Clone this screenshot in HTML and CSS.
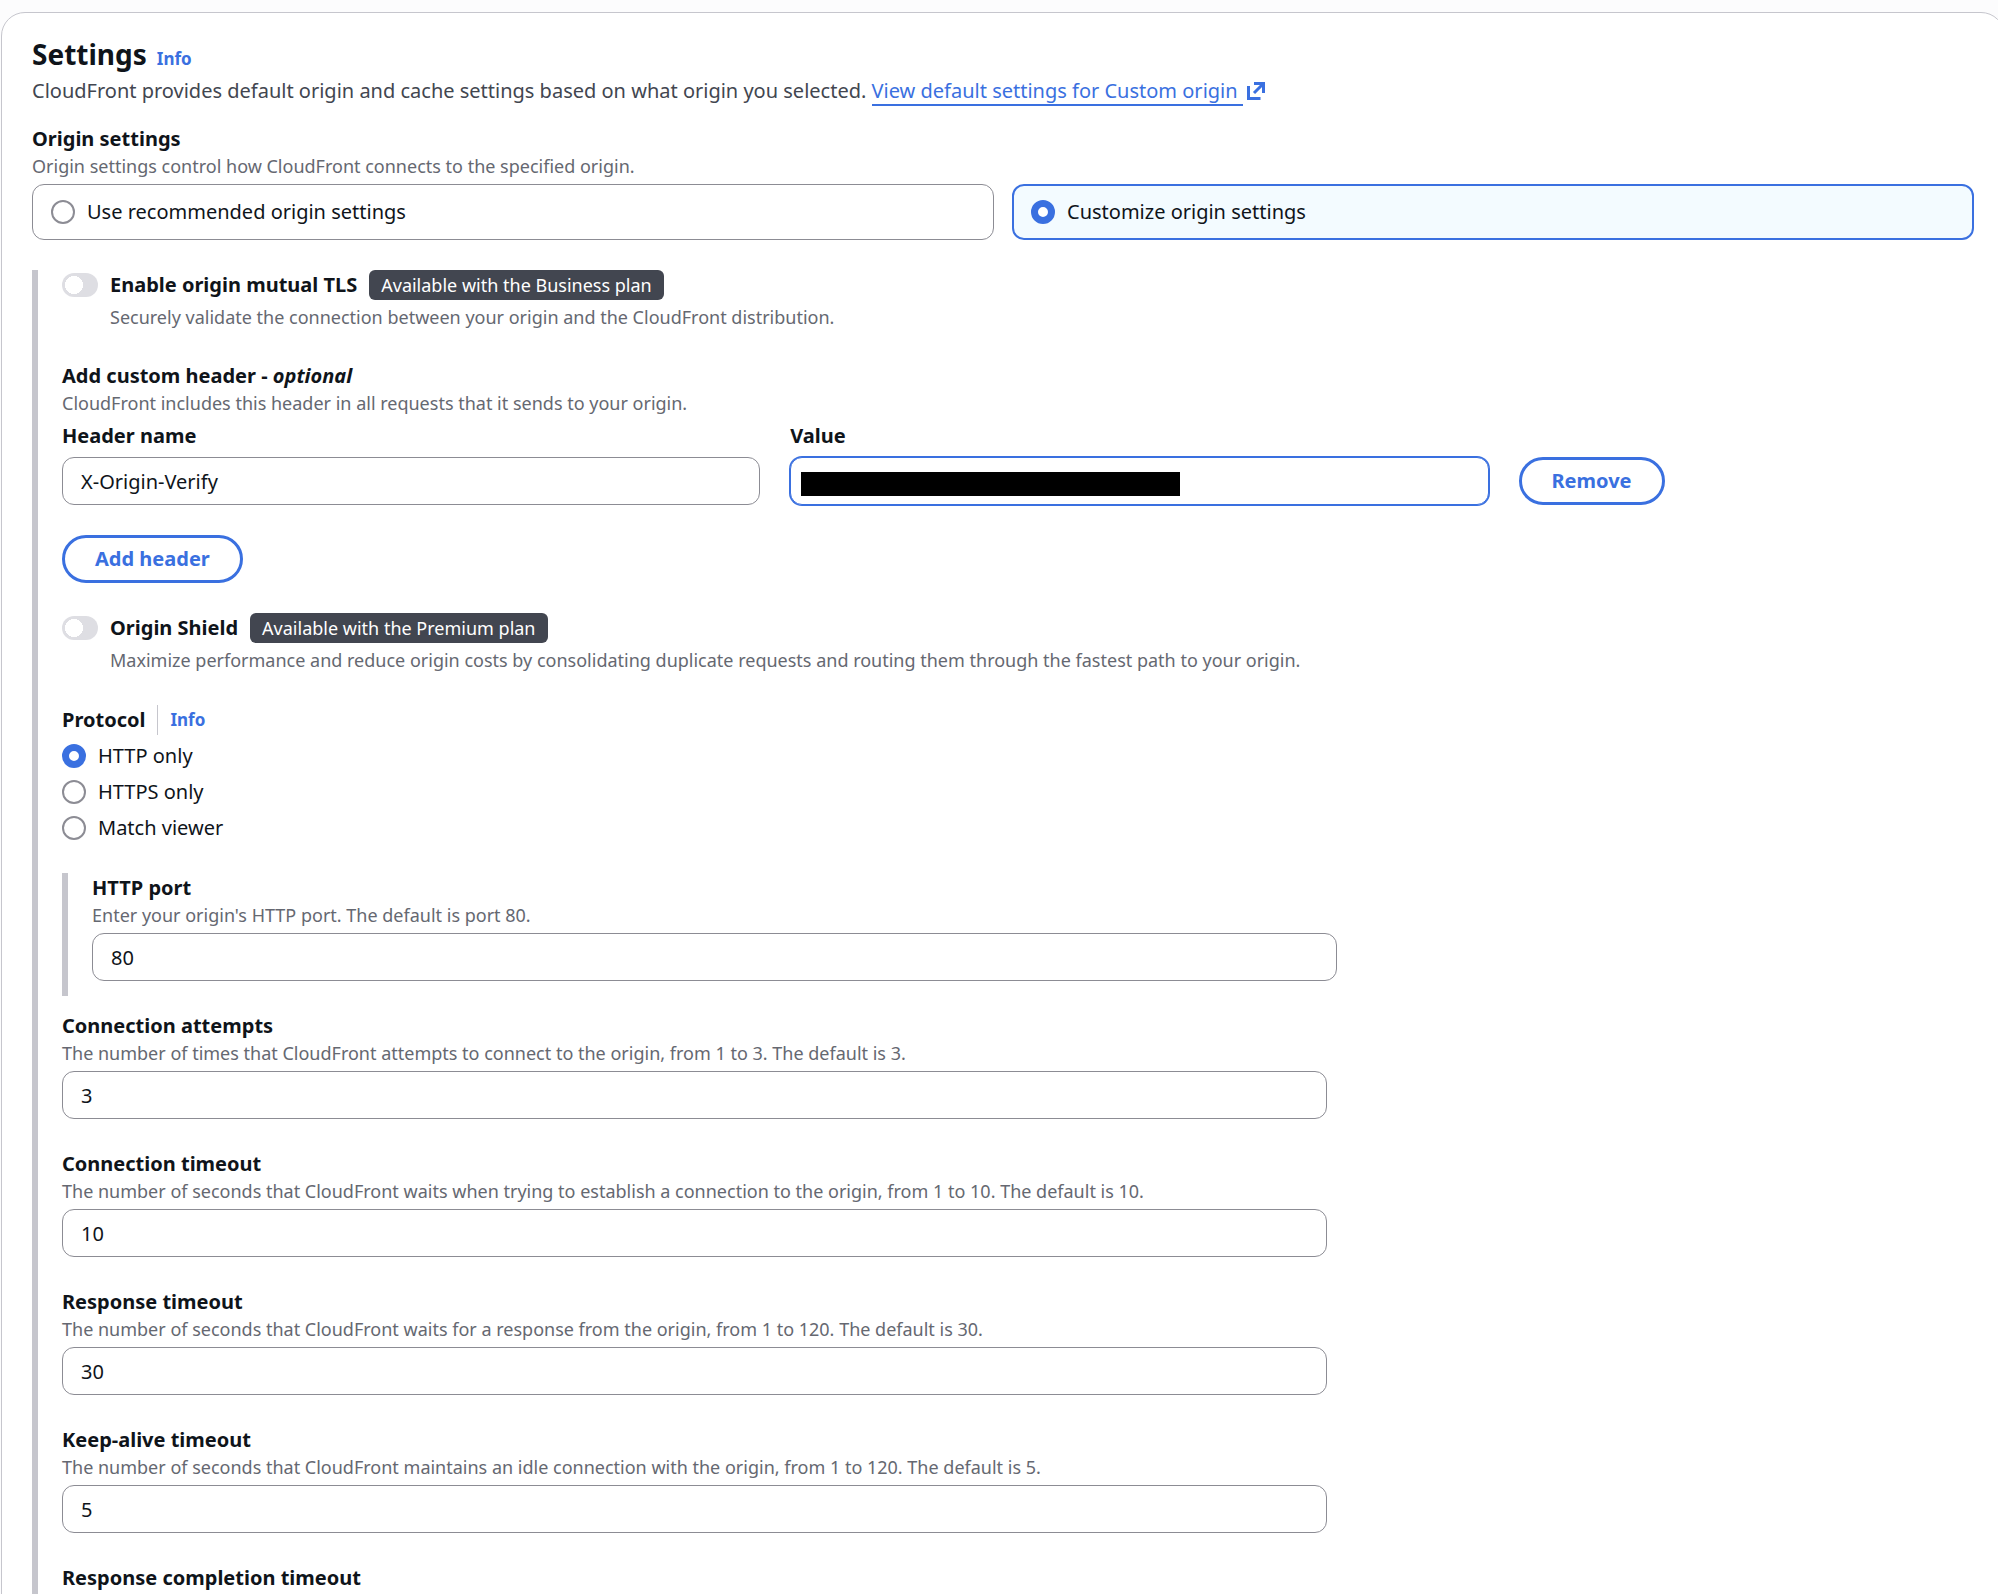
FILE: index.html
```html
<!DOCTYPE html>
<html lang="en">
<head>
    <meta charset="UTF-8">
    <meta name="viewport" content="width=device-width, initial-scale=1.0">
    <title>Create distribution</title>
    <link rel="stylesheet" href="styles.css">
</head>
<body>
    <main class="card">
        <header>
            <div class="card-title">
                <h1>Settings</h1>
                <a class="info" href="#">Info</a>
            </div>
            <p class="card-desc">CloudFront provides default origin and cache settings based on what origin you selected.
                <a class="external" href="#"><span>View default settings for Custom origin&nbsp;</span><svg class="icon" viewBox="0 0 18 18" aria-hidden="true"><path d="M1.5 4v12.5h12M7 1.5h9.5V11M16 2L7 11" fill="none" stroke="currentColor" stroke-width="3"/></svg></a>
            </p>
        </header>

        <fieldset class="origin-settings">
            <legend class="label">Origin settings</legend>
            <p class="hint">Origin settings control how CloudFront connects to the specified origin.</p>
            <div class="tiles">
                <label class="tile">
                    <input type="radio" name="origin">
                    Use recommended origin settings
                </label>
                <label class="tile selected">
                    <input type="radio" name="origin" checked>
                    Customize origin settings
                </label>
            </div>
        </fieldset>

        <section class="nested">
            <div class="toggle-field">
                <input type="checkbox" class="toggle" id="mtls" disabled>
                <label class="label" for="mtls">Enable origin mutual TLS</label>
                <span class="badge">Available with the Business plan</span>
                <p class="hint">Securely validate the connection between your origin and the CloudFront distribution.</p>
            </div>

            <div class="custom-header">
                <h2 class="label">Add custom header - <em>optional</em></h2>
                <p class="hint">CloudFront includes this header in all requests that it sends to your origin.</p>
                <div class="header-row">
                    <div class="header-col">
                        <label class="label" for="header-name">Header name</label>
                        <input type="text" id="header-name" value="X-Origin-Verify">
                    </div>
                    <div class="header-col">
                        <label class="label" for="header-value">Value</label>
                        <input type="text" class="focused redacted" id="header-value">
                    </div>
                    <button type="button" class="btn">Remove</button>
                </div>
                <button type="button" class="btn">Add header</button>
            </div>

            <div class="toggle-field">
                <input type="checkbox" class="toggle" id="shield" disabled>
                <label class="label" for="shield">Origin Shield</label>
                <span class="badge">Available with the Premium plan</span>
                <p class="hint">Maximize performance and reduce origin costs by consolidating duplicate requests and routing them through the fastest path to your origin.</p>
            </div>

            <div class="protocol" role="radiogroup" aria-labelledby="protocol-label">
                <div class="protocol-title">
                    <h2 class="label" id="protocol-label">Protocol</h2>
                    <a class="info" href="#">Info</a>
                </div>
                <label class="radio"><input type="radio" name="protocol" checked>HTTP only</label>
                <label class="radio"><input type="radio" name="protocol">HTTPS only</label>
                <label class="radio"><input type="radio" name="protocol">Match viewer</label>
            </div>

            <div class="nested port">
                <div class="field">
                    <label class="label" for="port">HTTP port</label>
                    <p class="hint">Enter your origin's HTTP port. The default is port 80.</p>
                    <input type="text" id="port" value="80">
                </div>
            </div>

            <div class="field">
                <label class="label" for="attempts">Connection attempts</label>
                <p class="hint">The number of times that CloudFront attempts to connect to the origin, from 1 to 3. The default is 3.</p>
                <input type="text" id="attempts" value="3">
            </div>

            <div class="field">
                <label class="label" for="conn-timeout">Connection timeout</label>
                <p class="hint">The number of seconds that CloudFront waits when trying to establish a connection to the origin, from 1 to 10. The default is 10.</p>
                <input type="text" id="conn-timeout" value="10">
            </div>

            <div class="field">
                <label class="label" for="resp-timeout">Response timeout</label>
                <p class="hint">The number of seconds that CloudFront waits for a response from the origin, from 1 to 120. The default is 30.</p>
                <input type="text" id="resp-timeout" value="30">
            </div>

            <div class="field">
                <label class="label" for="keep-alive">Keep-alive timeout</label>
                <p class="hint">The number of seconds that CloudFront maintains an idle connection with the origin, from 1 to 120. The default is 5.</p>
                <input type="text" id="keep-alive" value="5">
            </div>

            <div class="field">
                <h2 class="label">Response completion timeout</h2>
            </div>
        </section>
    </main>
</body>
</html>
```
FILE: styles.css
```css
* {
    box-sizing: border-box;
}
body {
    margin: 0;
    padding-top: 12px;
    background-color: #fcfcfd;
    color: #0f141a;
    font-family: "Noto Sans", sans-serif;
    font-size: 20px;
    line-height: 30px;
    overflow: hidden;
}
h1, h2, p {
    margin: 0;
}
input, button {
    margin: 0;
    font: inherit;
    color: inherit;
}
a {
    color: #3a70e0;
    text-decoration: none;
}

/* card, runs slightly past the right edge */
.card {
    margin: 0 -7px 0 1px;
    padding: 23px 30px 0;
    border: 1px solid #c6c6cd;
    border-radius: 24px;
    background-color: #fff;
}
.card-title {
    display: flex;
    align-items: baseline;
    gap: 10px;
}
h1 {
    font-size: 28px;
    line-height: 36px;
}
.info {
    font-size: 17px;
    font-weight: 700;
}
.card-desc {
    margin-top: 2px;
    color: #424650;
}
.external span {
    border-bottom: 2px solid #3a70e0;
}
.icon {
    width: 18px;
    height: 18px;
    margin-left: 4px;
    vertical-align: -2px;
}

.label {
    display: block;
    padding: 0;
    font-size: 20px;
    font-weight: 700;
    line-height: 30px;
}
.hint {
    color: #656871;
    font-size: 18px;
    line-height: 24px;
}

input[type="text"] {
    display: block;
    width: 100%;
    height: 48px;
    padding: 0 18px;
    border: 1px solid #8c8c94;
    border-radius: 12px;
    background-color: #fff;
    outline: none;
}
input.focused {
    border-color: #3a70e0;
    box-shadow: 0 0 0 1px #3a70e0;
}
input.redacted {
    background-image: linear-gradient(#000, #000);
    background-repeat: no-repeat;
    background-size: 379px 24px;
    background-position: 10px 14px;
}

input[type="radio"] {
    appearance: none;
    flex: none;
    width: 24px;
    height: 24px;
    border: 2px solid #8c8c94;
    border-radius: 50%;
    background-color: #fff;
}
input[type="radio"]:checked {
    border: 7px solid #3a70e0;
}

.origin-settings {
    margin: 18px 0 0;
    padding: 0;
    border: 0;
}
.tiles {
    display: grid;
    grid-template-columns: 1fr 1fr;
    gap: 18px;
    margin-top: 6px;
}
.tile {
    display: flex;
    align-items: center;
    gap: 12px;
    height: 56px;
    padding: 0 18px;
    border: 1px solid #8c8c94;
    border-radius: 12px;
}
.tile.selected {
    padding: 0 17px;
    border: 2px solid #3a70e0;
    background-color: #f3fbff;
}

.nested {
    margin-top: 30px;
    padding-left: 24px;
    padding-bottom: 30px;
    border-left: 6px solid #c6c6cd;
}

.toggle-field {
    display: grid;
    grid-template-columns: auto auto 1fr;
    align-items: center;
    column-gap: 12px;
    row-gap: 5px;
}
.toggle-field .hint {
    grid-column: 2 / -1;
}
.toggle {
    appearance: none;
    width: 36px;
    height: 24px;
    border-radius: 12px;
    background: radial-gradient(circle at 12px 12px, #fff 9px, #dedee3 9px);
}
.badge {
    justify-self: start;
    height: 30px;
    padding: 0 12px;
    border-radius: 6px;
    background-color: #424650;
    color: #fff;
    font-size: 18px;
}

.custom-header {
    margin: 32px 0 30px;
}
.header-row {
    display: grid;
    grid-template-columns: repeat(8, 1fr);
    align-items: end;
    column-gap: 30px;
    margin: 6px 0 30px;
}
.header-col {
    display: grid;
    grid-column: span 3;
    row-gap: 6px;
}
.btn {
    justify-self: start;
    height: 48px;
    padding: 0 30px;
    border: 3px solid #3a70e0;
    border-radius: 24px;
    background-color: #fff;
    color: #3a70e0;
    font-weight: 700;
}

.protocol {
    display: grid;
    row-gap: 6px;
    margin-top: 33px;
}
.protocol-title {
    display: flex;
}
.protocol-title .info {
    margin-left: 12px;
    padding-left: 12px;
    border-left: 1px solid #c6c6cd;
}
.radio {
    display: flex;
    align-items: center;
    gap: 12px;
}

.port {
    padding-bottom: 15px;
    margin-bottom: 15px;
}
/* two thirds of the row, less the gutter */
.field {
    margin-bottom: 30px;
}
.port .field {
    margin-bottom: 0;
}
.field input {
    width: calc((100% + 30px) * 2 / 3 - 30px);
    margin-top: 6px;
}
```
